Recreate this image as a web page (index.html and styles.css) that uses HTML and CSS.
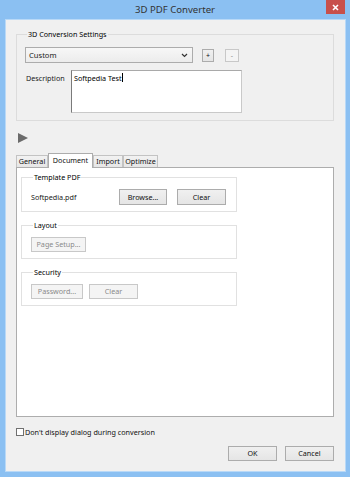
FILE: index.html
```html
<!DOCTYPE html>
<html lang="en">
  <head>
    <meta charset="UTF-8" />
    <title>3D PDF Converter</title>
    <link rel="stylesheet" href="styles.css">
  </head>
  <body>
    <div class="window">
      <div class="titlebar">
        <span></span>
        <span class="title">3D PDF Converter</span>
        <span class="close">
          <svg width="7" height="7" viewBox="0 0 7 7"><path d="M1 1L6 6M6 1L1 6" stroke="#fff" stroke-width="1.6"/></svg>
        </span>
      </div>

      <div class="client">
        <fieldset class="group settings">
          <legend>3D Conversion Settings</legend>
          <div class="row">
            <div class="combo">
              <span>Custom</span>
              <svg width="7" height="5" viewBox="0 0 7 5"><path d="M1 1L3.5 3.5L6 1" stroke="#333" stroke-width="1.2" fill="none"/></svg>
            </div>
            <button class="btn mini">+</button>
            <button class="btn mini off">-</button>
          </div>
          <div class="row desc">
            <span class="desc-label">Description</span>
            <div class="textarea">Softpedia Test<span class="caret"></span></div>
          </div>
        </fieldset>

        <div class="play">
          <svg width="10" height="10" viewBox="0 0 10 10"><path d="M0 0L10 5L0 10Z" fill="#6b6b6b"/></svg>
        </div>

        <div class="tabs">
          <div class="tab t-general">General</div>
          <div class="tab t-document active">Document</div>
          <div class="tab t-import">Import</div>
          <div class="tab t-optimize">Optimize</div>
        </div>

        <div class="panel">
          <fieldset class="group inner">
            <legend>Template PDF</legend>
            <div class="row">
              <span class="file">Softpedia.pdf</span>
              <button class="btn w48 tall">Browse...</button>
              <button class="btn w49 tall">Clear</button>
            </div>
          </fieldset>

          <fieldset class="group inner">
            <legend>Layout</legend>
            <div class="row">
              <button class="btn off w55">Page Setup...</button>
            </div>
          </fieldset>

          <fieldset class="group inner">
            <legend>Security</legend>
            <div class="row gap6">
              <button class="btn off w52">Password...</button>
              <button class="btn off w49">Clear</button>
            </div>
          </fieldset>
        </div>

        <label class="check"><span class="box"></span>Don't display dialog during conversion</label>

        <div class="actions">
          <button class="btn w49">OK</button>
          <button class="btn w49">Cancel</button>
        </div>
      </div>
    </div>
  </body>
</html>
```

FILE: styles.css
```css
body {
  margin: 0;
  background-color: #8bc0f2;
  font-family: "Noto Sans", "Open Sans", sans-serif;
  font-size: 7.2px;
  color: #1a1a1a;
}
.window {
  width: 350px;
  height: 477px;
  display: flex;
  flex-direction: column;
  background-color: #8bc0f2;
}
.titlebar {
  height: 20px;
  display: grid;
  grid-template-columns: 1fr auto 1fr;
  align-items: start;
}
.title {
  font-size: 9.6px;
  line-height: 20px;
  color: #333;
}
.close {
  justify-self: end;
  margin-right: 5px;
  width: 19px;
  height: 14px;
  background-color: #c8504b;
  display: flex;
  align-items: center;
  justify-content: center;
}
.client {
  flex: 1;
  margin: 0 5px 6px 6px;
  padding: 9px 11px 10px 10px;
  background-color: #f0f0f0;
  display: flex;
  flex-direction: column;
  box-shadow: 0 0 0 1px #b9d9f7;
}

/* group boxes */
.group {
  margin: 0;
  min-width: 0;
  border: 1px solid #dcdcdc;
}
.group legend {
  padding: 0 1px;
  margin-left: 2px;
  line-height: 10px;
  color: #000;
}
.settings {
  padding: 8px 8px 7px 8px;
}
.row {
  display: flex;
  align-items: center;
}
.combo {
  width: 168px;
  height: 16px;
  box-sizing: border-box;
  border: 1px solid #acacac;
  background: linear-gradient(#f7f7f7, #ececec);
  display: flex;
  align-items: center;
  justify-content: space-between;
  padding: 0 4px 0 3px;
  margin-right: 9px;
  font-size: 7.6px;
}
.desc {
  margin-top: 7px;
  align-items: flex-start;
}
.desc-label {
  width: 45px;
  margin-left: 1px;
  padding-top: 3px;
  line-height: 10px;
}
.textarea {
  width: 171px;
  height: 43px;
  box-sizing: border-box;
  background-color: #fff;
  border: 1px solid #c9c9c9;
  border-left-color: #7a7a7a;
  border-top-color: #a9a9a9;
  padding: 2px 2px;
  line-height: 10px;
  color: #000;
}
.caret {
  display: inline-block;
  width: 1px;
  height: 9px;
  background-color: #000;
  vertical-align: -1px;
}

/* buttons */
.btn {
  font: inherit;
  color: #111;
  height: 15px;
  padding: 0;
  box-sizing: border-box;
  border: 1px solid #acacac;
  background: linear-gradient(#f0f0f0, #e5e5e5);
  line-height: 13px;
}
.btn.off {
  color: #8a8a8a;
  border-color: #c8c8c8;
  background: #f4f4f4;
}
.mini {
  width: 12px;
  height: 13px;
  margin-right: 11px;
  font-size: 7px;
  line-height: 11px;
}
.mini.off {
  width: 14px;
}
.tall {
  height: 16px;
}
.w48 { width: 48px; }
.w49 { width: 49px; }
.w52 { width: 52px; }
.w55 { width: 55px; }

.play {
  margin: 12px 0 0 2px;
  height: 10px;
  line-height: 0;
}

/* tabs */
.tabs {
  margin-top: 10px;
  height: 14px;
  display: flex;
  align-items: flex-end;
  position: relative;
  z-index: 1;
}
.tab {
  height: 12px;
  box-sizing: border-box;
  border: 1px solid #c3c3c3;
  border-bottom: none;
  background: linear-gradient(#f2f2f2, #e6e6e6);
  text-align: center;
  line-height: 11px;
  color: #111;
}
.t-general { width: 32px; }
.t-document { width: 45px; }
.t-import { width: 30px; }
.t-optimize { width: 35px; }
.tab.active {
  height: 15px;
  margin-bottom: -1px;
  background: #fff;
  border-color: #acacac;
  line-height: 12px;
}
.panel {
  flex: 1;
  background-color: #fff;
  border: 1px solid #adadad;
  padding: 4px 4px 0 4px;
  display: flex;
  flex-direction: column;
  align-items: flex-start;
  gap: 8px;
}
.inner {
  width: 216px;
  box-sizing: border-box;
  padding: 7px 8px 6px 9px;
  border-color: #e1e1e1;
}
.file {
  width: 88px;
}
.inner .w48 {
  margin-right: 10px;
}
.gap6 {
  gap: 6px;
}

/* footer */
.check {
  margin-top: 10px;
  height: 10px;
  display: flex;
  align-items: center;
  gap: 1px;
  color: #111;
}
.check .box {
  width: 8px;
  height: 8px;
  box-sizing: border-box;
  border: 1px solid #707070;
  background-color: #fff;
}
.actions {
  margin-top: 9px;
  display: flex;
  justify-content: flex-end;
  gap: 8px;
}
```
